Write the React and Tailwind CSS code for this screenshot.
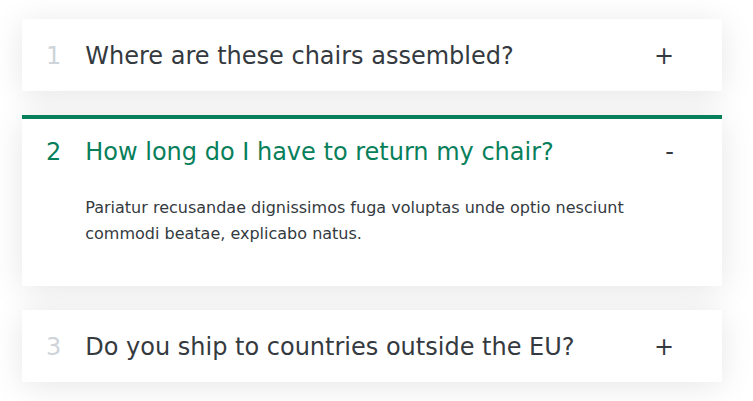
import React from "react";

const items = [
  { n: 1, q: "Where are these chairs assembled?", open: false },
  {
    n: 2,
    q: "How long do I have to return my chair?",
    open: true,
    a: "Pariatur recusandae dignissimos fuga voluptas unde optio nesciunt commodi beatae, explicabo natus.",
  },
  { n: 3, q: "Do you ship to countries outside the EU?", open: false },
];

function Item({ n, q, open, a }) {
  return (
    <div
      className={
        "grid grid-cols-[auto_1fr_auto] gap-x-6 items-center bg-white border-t-4 pt-[17px] pl-6 pr-12 shadow-[0_4px_32px_rgba(0,0,0,0.1)] " +
        (open ? "border-[#087f5b] pb-[39px]" : "border-white pb-[19px]")
      }
    >
      <span
        className={
          "text-[24px] leading-[32px] " + (open ? "text-[#087f5b]" : "text-[#ced4da]")
        }
      >
        {n}
      </span>
      <span
        className={
          "text-[24px] leading-[32px] " + (open ? "text-[#087f5b]" : "text-[#343a40]")
        }
      >
        {q}
      </span>
      <span className="text-[24px] leading-[32px] text-[#343a40] text-right">
        {open ? "-" : "+"}
      </span>
      {open && (
        <div className="col-start-2 col-end-3 mt-[27px] text-[16px] leading-[26px] text-[#343a40]">
          {a}
        </div>
      )}
    </div>
  );
}

export default function App() {
  return (
    <div
      className="min-h-[401px] bg-white pt-[19px] pb-5"
      style={{ fontFamily: '"DejaVu Sans", sans-serif' }}
    >
      <div className="ml-[22px] w-[700px] flex flex-col gap-6">
        {items.map((it) => (
          <Item key={it.n} {...it} />
        ))}
      </div>
    </div>
  );
}
